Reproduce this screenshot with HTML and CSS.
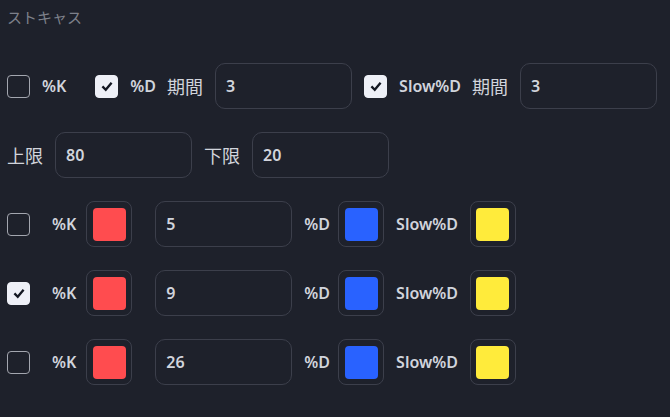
FILE: index.html
```html
<!DOCTYPE html>
<html lang="ja">
<head>
    <meta charset="UTF-8">
    <title>ストキャス</title>
    <meta name="viewport" content="width=device-width, initial-scale=1.0">
    <link rel="stylesheet" href="styles.css">
</head>
<body>
    <div class="panel">
        <div class="title">ストキャス</div>

        <div class="row">
            <span class="check"></span>
            <span class="lbl gap-after">%K</span>
            <span class="check on"><svg viewBox="0 0 24 24"><polyline points="6.5,12.5 10.5,16.5 17.5,8"/></svg></span>
            <span class="lbl near">%D</span>
            <span class="jp">期間</span>
            <input class="field" type="text" value="3">
            <span class="check on"><svg viewBox="0 0 24 24"><polyline points="6.5,12.5 10.5,16.5 17.5,8"/></svg></span>
            <span class="lbl slow">Slow%D</span>
            <span class="jp">期間</span>
            <input class="field" type="text" value="3">
        </div>

        <div class="row">
            <span class="jp">上限</span>
            <input class="field" type="text" value="80">
            <span class="jp">下限</span>
            <input class="field" type="text" value="20">
        </div>

        <div class="row">
            <span class="check"></span>
            <span class="lbl wide">%K</span>
            <span class="swatch"><i class="red"></i></span>
            <input class="field wide" type="text" value="5">
            <span class="lbl tight">%D</span>
            <span class="swatch"><i class="blue"></i></span>
            <span class="lbl">Slow%D</span>
            <span class="swatch"><i class="yellow"></i></span>
        </div>

        <div class="row">
            <span class="check on"><svg viewBox="0 0 24 24"><polyline points="6.5,12.5 10.5,16.5 17.5,8"/></svg></span>
            <span class="lbl wide">%K</span>
            <span class="swatch"><i class="red"></i></span>
            <input class="field wide" type="text" value="9">
            <span class="lbl tight">%D</span>
            <span class="swatch"><i class="blue"></i></span>
            <span class="lbl">Slow%D</span>
            <span class="swatch"><i class="yellow"></i></span>
        </div>

        <div class="row">
            <span class="check"></span>
            <span class="lbl wide">%K</span>
            <span class="swatch"><i class="red"></i></span>
            <input class="field wide" type="text" value="26">
            <span class="lbl tight">%D</span>
            <span class="swatch"><i class="blue"></i></span>
            <span class="lbl">Slow%D</span>
            <span class="swatch"><i class="yellow"></i></span>
        </div>
    </div>
</body>
</html>
```

FILE: styles.css
```css
* {
    box-sizing: border-box;
}

body {
    background-color: #1e212b;
    color: #d1d4dc;
    font-family: 'Noto Sans', 'Noto Sans CJK JP', sans-serif;
    margin: 0;
    padding: 0;
}

.panel {
    padding: 7px 7px 0 7px;
}

.title {
    color: #7d808a;
    font-size: 15px;
    line-height: 20px;
    font-family: 'Noto Sans CJK JP', sans-serif;
    margin-bottom: 36px;
}

.row {
    display: flex;
    align-items: center;
    gap: 12px;
    height: 46px;
    margin-bottom: 23px;
}

.lbl {
    font-size: 16px;
    font-weight: 600;
}

.gap-after {
    margin-right: 17px;
}

.wide {
    margin-left: 10px;
    margin-right: -2px;
}

.field.wide {
    margin-left: 11px;
    margin-right: 0;
}

.near {
    margin-right: -1px;
}

.tight {
    margin-right: -4px;
}

.slow {
    margin-right: -1px;
}

.jp {
    font-family: 'Noto Sans CJK JP', sans-serif;
    font-size: 18px;
    color: #d1d4dc;
}

.check {
    width: 23px;
    height: 23px;
    border: 1.5px solid #a3a6af;
    border-radius: 4px;
    display: flex;
    align-items: center;
    justify-content: center;
}

.check.on {
    background-color: #eef0f7;
    border-color: #eef0f7;
}

.check svg {
    width: 20px;
    height: 20px;
    fill: none;
    stroke: #131722;
    stroke-width: 2.8;
}

.field {
    width: 137px;
    height: 46px;
    background-color: transparent;
    border: 1.5px solid #3c3f4b;
    border-radius: 10px;
    color: #d1d4dc;
    font-family: 'Noto Sans', sans-serif;
    font-size: 16px;
    font-weight: 600;
    padding: 0 10px;
    outline: none;
}

.swatch {
    width: 46px;
    height: 46px;
    border: 1.5px solid #3c3f4b;
    border-radius: 8px;
    display: flex;
    align-items: center;
    justify-content: center;
}

.swatch i {
    width: 33px;
    height: 33px;
    border-radius: 4px;
}

.red {
    background-color: #ff4c4f;
}

.blue {
    background-color: #2962ff;
}

.yellow {
    background-color: #ffeb3b;
}
```
